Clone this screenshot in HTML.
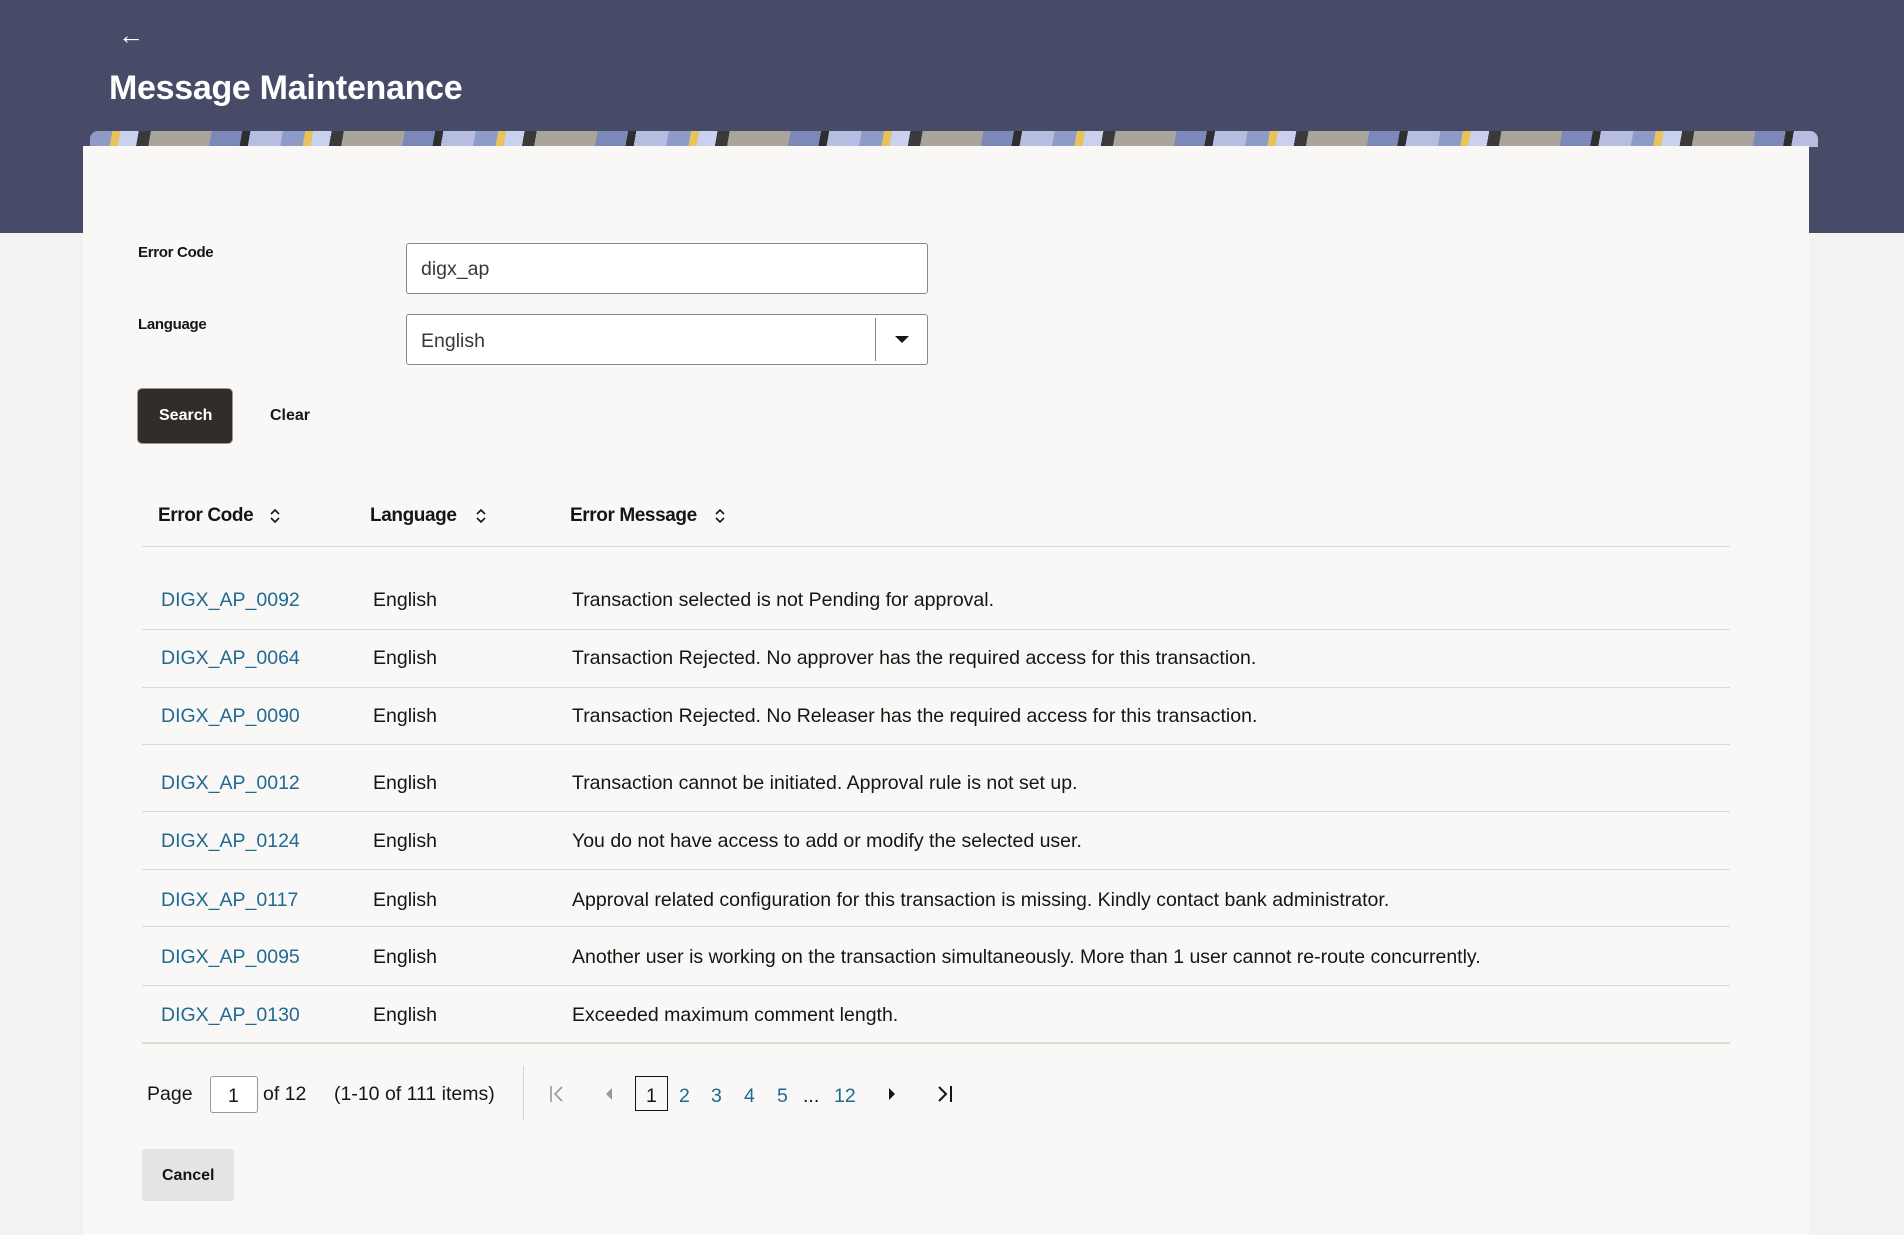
<!DOCTYPE html>
<html><head><meta charset="utf-8"><style>
*{margin:0;padding:0;box-sizing:border-box}
body{width:1904px;height:1235px;overflow:hidden;background:#f3f2f0;font-family:"Liberation Sans",sans-serif;color:#161513;position:relative}
.hdr{position:absolute;left:0;top:0;width:1904px;height:233px;background:#474b68}
.abs{position:absolute;white-space:nowrap}
.strip{position:absolute;left:90px;top:131px;width:1728px;height:16px;border-radius:8px 8px 0 0;overflow:hidden;
background:repeating-linear-gradient(100deg,#8f9bc7 0 22px,#e8c25a 22px 30px,#c9d1ee 30px 48px,#3a3a3a 48px 60px,#a9a49c 60px 120px,#7c88b8 120px 150px,#2e2e2e 150px 158px,#b6bde0 158px 190px)}
.card{position:absolute;left:83px;top:146px;width:1726px;height:1089px;background:#f9f8f6}
.lbl{font-size:15px;font-weight:bold;letter-spacing:-0.3px}
.inp{position:absolute;background:#fff;border:1px solid #8a8886;border-radius:3px}
.th{font-size:19px;font-weight:bold;letter-spacing:-0.4px}
.td{font-size:19.5px;letter-spacing:0}
.lnk{color:#1f6a93}
.hl{position:absolute;left:142px;width:1588px;height:1px;background:#dcdad7}
.pg{font-size:19.5px}
</style></head><body>
<div class="hdr"></div>
<div class="abs" style="left:118px;top:20px;color:#fff;font-size:26px">&#8592;</div>
<div class="abs" style="left:109px;top:69px;color:#fff;font-size:34px;font-weight:bold;letter-spacing:-0.3px">Message Maintenance</div>
<div class="strip"></div>
<div class="card"></div>

<div class="abs lbl" style="left:138px;top:244px">Error Code</div>
<div class="inp" style="left:406px;top:243px;width:522px;height:51px"></div>
<div class="abs" style="left:421px;top:258px;font-size:19.5px;color:#3a3836">digx_ap</div>

<div class="abs lbl" style="left:138px;top:316px">Language</div>
<div class="inp" style="left:406px;top:314px;width:522px;height:51px"></div>
<div class="abs" style="left:421px;top:330px;font-size:19.5px;color:#3a3836">English</div>
<div class="abs" style="left:875px;top:318px;width:1px;height:43px;background:#8a8886"></div>
<div class="abs" style="left:895px;top:336px;width:0;height:0;border-left:7px solid transparent;border-right:7px solid transparent;border-top:7px solid #161513"></div>

<div class="abs" style="left:138px;top:389px;width:94px;height:54px;background:#312d2a;border-radius:4px;box-shadow:0 0 0 1px #9a9896"></div>
<div class="abs" style="left:159px;top:407px;color:#fff;font-size:16px;font-weight:bold">Search</div>
<div class="abs" style="left:270px;top:407px;font-size:16px;font-weight:bold">Clear</div>

<div class="abs th" style="left:158px;top:505px">Error Code</div>
<div class="abs th" style="left:370px;top:505px">Language</div>
<div class="abs th" style="left:570px;top:505px">Error Message</div>
<svg class="abs" style="left:268px;top:506px" width="14" height="20"><path d="M3 8l4-4 4 4M3 12l4 4 4-4" fill="none" stroke="#161513" stroke-width="1.6"/></svg>
<svg class="abs" style="left:474px;top:506px" width="14" height="20"><path d="M3 8l4-4 4 4M3 12l4 4 4-4" fill="none" stroke="#161513" stroke-width="1.6"/></svg>
<svg class="abs" style="left:713px;top:506px" width="14" height="20"><path d="M3 8l4-4 4 4M3 12l4 4 4-4" fill="none" stroke="#161513" stroke-width="1.6"/></svg>
<div class="hl" style="top:546px"></div>

<div class="abs td lnk" style="left:161px;top:589px">DIGX_AP_0092</div><div class="abs td" style="left:373px;top:589px">English</div><div class="abs td" style="left:572px;top:589px">Transaction selected is not Pending for approval.</div>
<div class="hl" style="top:629px"></div>
<div class="abs td lnk" style="left:161px;top:647px">DIGX_AP_0064</div><div class="abs td" style="left:373px;top:647px">English</div><div class="abs td" style="left:572px;top:647px">Transaction Rejected. No approver has the required access for this transaction.</div>
<div class="hl" style="top:687px"></div>
<div class="abs td lnk" style="left:161px;top:705px">DIGX_AP_0090</div><div class="abs td" style="left:373px;top:705px">English</div><div class="abs td" style="left:572px;top:705px">Transaction Rejected. No Releaser has the required access for this transaction.</div>
<div class="hl" style="top:744px"></div>
<div class="abs td lnk" style="left:161px;top:772px">DIGX_AP_0012</div><div class="abs td" style="left:373px;top:772px">English</div><div class="abs td" style="left:572px;top:772px">Transaction cannot be initiated. Approval rule is not set up.</div>
<div class="hl" style="top:811px"></div>
<div class="abs td lnk" style="left:161px;top:830px">DIGX_AP_0124</div><div class="abs td" style="left:373px;top:830px">English</div><div class="abs td" style="left:572px;top:830px">You do not have access to add or modify the selected user.</div>
<div class="hl" style="top:869px"></div>
<div class="abs td lnk" style="left:161px;top:889px">DIGX_AP_0117</div><div class="abs td" style="left:373px;top:889px">English</div><div class="abs td" style="left:572px;top:889px">Approval related configuration for this transaction is missing. Kindly contact bank administrator.</div>
<div class="hl" style="top:926px"></div>
<div class="abs td lnk" style="left:161px;top:946px">DIGX_AP_0095</div><div class="abs td" style="left:373px;top:946px">English</div><div class="abs td" style="left:572px;top:946px">Another user is working on the transaction simultaneously. More than 1 user cannot re-route concurrently.</div>
<div class="hl" style="top:985px"></div>
<div class="abs td lnk" style="left:161px;top:1004px">DIGX_AP_0130</div><div class="abs td" style="left:373px;top:1004px">English</div><div class="abs td" style="left:572px;top:1004px">Exceeded maximum comment length.</div>
<div class="hl" style="top:1042px;height:2px"></div>

<div class="abs pg" style="left:147px;top:1083px">Page</div>
<div class="inp" style="left:210px;top:1076px;width:48px;height:37px;border-color:#9a9896"></div>
<div class="abs pg" style="left:228px;top:1085px">1</div>
<div class="abs pg" style="left:263px;top:1083px">of 12</div>
<div class="abs pg" style="left:334px;top:1083px">(1-10 of 111 items)</div>
<div class="abs" style="left:523px;top:1066px;width:1px;height:54px;background:#d6d4d1"></div>
<svg class="abs" style="left:548px;top:1084px" width="20" height="20"><path d="M3 2v16M14 3l-7 7 7 7" fill="none" stroke="#9a9896" stroke-width="1.6"/></svg>
<svg class="abs" style="left:603px;top:1086px" width="12" height="16"><path d="M9 2L3 8l6 6z" fill="#9a9896"/></svg>
<div class="abs" style="left:635px;top:1076px;width:33px;height:35px;border:1.5px solid #161513"></div>
<div class="abs pg" style="left:646px;top:1085px">1</div>
<div class="abs pg lnk" style="left:679px;top:1085px">2</div>
<div class="abs pg lnk" style="left:711px;top:1085px">3</div>
<div class="abs pg lnk" style="left:744px;top:1085px">4</div>
<div class="abs pg lnk" style="left:777px;top:1085px">5</div>
<div class="abs pg" style="left:803px;top:1085px">...</div>
<div class="abs pg lnk" style="left:834px;top:1085px">12</div>
<svg class="abs" style="left:886px;top:1086px" width="12" height="16"><path d="M3 2l6 6-6 6z" fill="#161513"/></svg>
<svg class="abs" style="left:935px;top:1084px" width="20" height="20"><path d="M4 3l7 7-7 7M16 2v16" fill="none" stroke="#161513" stroke-width="2"/></svg>

<div class="abs" style="left:142px;top:1149px;width:92px;height:52px;background:#e6e4e2;border-radius:3px"></div>
<div class="abs" style="left:162px;top:1167px;font-size:16px;font-weight:bold">Cancel</div>
</body></html>
